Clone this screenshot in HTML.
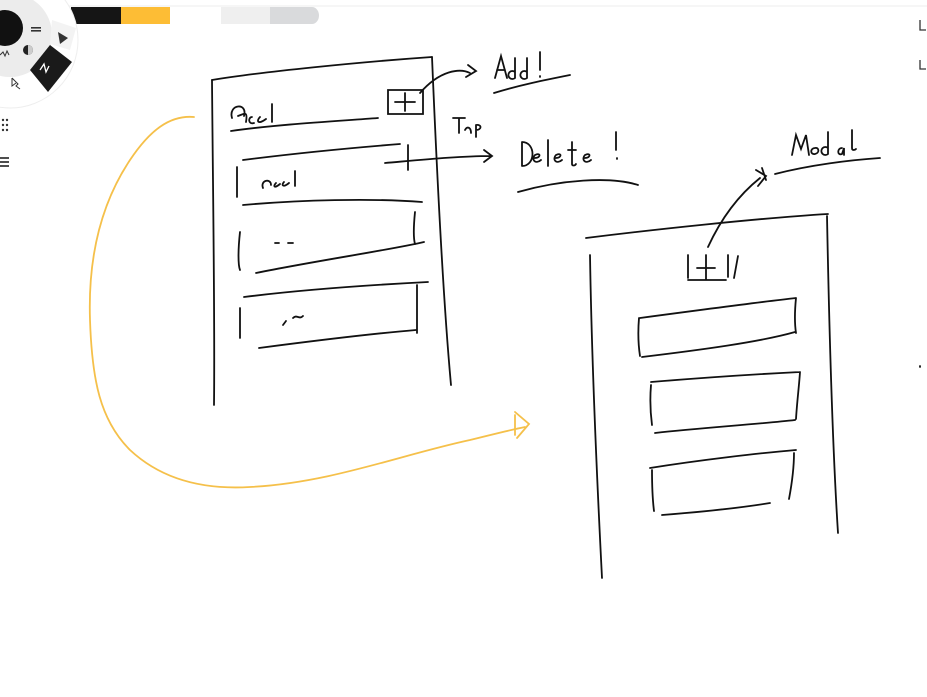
<!DOCTYPE html>
<html><head><style>
html,body{margin:0;padding:0;background:#fff;width:927px;height:697px;overflow:hidden}
svg{display:block}
text{font-family:"Liberation Sans",sans-serif}
</style></head><body>
<svg width="927" height="697" viewBox="0 0 927 697" xmlns="http://www.w3.org/2000/svg">
<line x1="0" y1="6" x2="927" y2="6" stroke="#eee" stroke-width="1"/>
<rect x="71" y="7" width="50" height="17" fill="#151515"/>
<rect x="121" y="7" width="49" height="17" fill="#fdbd35"/>
<rect x="221" y="7" width="49" height="17" fill="#efefef"/>
<path d="M270 7 H312 a7 8.5 0 0 1 0 17 H270 Z" fill="#d9dadc"/>
<circle cx="10" cy="40" r="68" fill="#fff" stroke="#eee"/>
<circle cx="10" cy="35" r="42" fill="#ececec"/>
<path d="M30 70 L50 45 L72 62 L48 92 Z" fill="#1a1a1a"/>
<path d="M52 20 L76 28 L70 50 L50 44 Z" fill="#f3f3f3"/>
<path d="M58 32 L68 38 L60 44 Z" fill="#333"/>
<circle cx="5" cy="28" r="18" fill="#111"/>
<rect x="31" y="27" width="10" height="1.6" fill="#333"/><rect x="31" y="30" width="10" height="1.6" fill="#333"/>
<circle cx="28" cy="50" r="5" fill="#222"/><path d="M28 45 a5 5 0 0 1 0 10 Z" fill="#ccc"/>
<path d="M40 70 l4 -6 l2 8 l3 -6" stroke="#fff" fill="none" stroke-width="1.3"/>
<path d="M0 55 l3 -3 l2 4 l2 -5 l2 4" stroke="#333" fill="none"/>
<path d="M12 78 l6 6 l-2 2 l4 3 m-8 -11 l0 8 l4 -3" stroke="#333" fill="none"/>
<g fill="#333"><circle cx="3" cy="120" r="1.2"/><circle cx="7" cy="120" r="1.2"/><circle cx="3" cy="125" r="1.2"/><circle cx="7" cy="125" r="1.2"/><circle cx="3" cy="130" r="1.2"/><circle cx="7" cy="130" r="1.2"/></g>
<g stroke="#222" stroke-width="1.6"><line x1="0" y1="158" x2="9" y2="158"/><line x1="0" y1="162" x2="9" y2="162"/><line x1="0" y1="166" x2="9" y2="166"/></g>
<path d="M920 20 v10 h6 M920 60 v9 h6" stroke="#333" fill="none" stroke-width="1.3"/>
<g stroke="#111" stroke-width="1.8" fill="none" stroke-linecap="round">
<path d="M212 80 C260 72 360 62 432 57"/>
<path d="M212 80 C213 200 215 320 214 405"/>
<path d="M432 57 C438 200 445 320 451 385"/>
<path d="M232 118 c-4 -14 16 -16 12 -2 M238 116 c6 -2 10 -6 8 6 m6 -5 c-4 0 -4 8 2 6 m6 -6 c-4 4 -2 8 6 2 m6 -15 v18"/>
<path d="M231 131 C280 124 340 121 378 118"/>
<path d="M388 90 h35 v24 h-35 z M405 93 v18 M395 102 h20"/>
<path d="M420 93 C440 70 460 68 470 73 M468 65 l8 6 l-10 6"/>
<path d="M495 78 l6 -22 l6 22 M497 70 h8 M515 72 a4 4 0 1 0 0 6 v-20 M527 72 a4 4 0 1 0 0 6 v-20 M540 52 v18 M540 76 v1"/>
<path d="M494 93 C520 85 545 80 570 75"/>
<path d="M243 160 C290 154 350 148 400 144"/>
<path d="M237 167 v30 M408 145 v25"/>
<path d="M263 188 c-3 -8 8 -10 8 -3 m5 -2 c-3 3 -2 6 4 1 m4 -2 c-3 3 -1 6 5 1 m6 -12 v15"/>
<path d="M385 163 C420 160 460 156 490 156 M484 150 l8 6 l-8 6"/>
<path d="M453 118 h12 M459 118 v15 M465 130 c2 -4 6 -3 6 3 M476 125 v12 M476 125 c6 -1 6 5 0 5"/>
<path d="M522 142 v24 M522 142 c14 0 14 24 0 24 M535 158 c6 0 6 -6 0 -3 c-4 4 0 10 6 5 M548 140 v26 M556 158 c6 0 6 -6 0 -3 c-4 4 0 10 6 5 M568 150 h8 M572 142 v22 c0 2 3 2 4 0 M585 158 c6 0 6 -6 0 -3 c-4 4 0 10 6 5 M616 132 v18 M617 158 v1"/>
<path d="M518 192 C560 180 610 176 638 185"/>
<path d="M243 205 C300 200 370 198 422 202"/>
<path d="M240 232 C238 250 238 265 240 270 M415 212 c-1 10 -2 25 0 32"/>
<path d="M256 273 C320 260 390 250 424 242"/>
<path d="M275 243 h4 M288 243 h5"/>
<path d="M244 297 C300 290 370 285 428 282"/>
<path d="M240 308 v30 M417 285 v48"/>
<path d="M283 325 l3 -4 M293 318 c4 -4 6 2 10 -2"/>
<path d="M259 348 C320 340 380 333 416 330"/>
<path d="M586 238 C650 230 760 218 828 214"/>
<path d="M590 255 C592 380 598 500 602 578"/>
<path d="M827 216 C829 320 832 440 838 533"/>
<path d="M688 255 v23 M688 280 h38 M706 255 v24 M697 268 h18 M728 255 v22 M738 256 l-4 22"/>
<path d="M708 247 C725 210 745 190 760 178 M756 170 l10 6 l-8 10 M762 168 l4 12"/>
<path d="M775 174 C810 165 850 160 880 158"/>
<path d="M792 155 l4 -20 l5 14 l5 -14 l3 20 M815 148 c-5 0 -5 7 0 6 c5 -1 4 -7 0 -6 M828 148 a4 4 0 1 0 0 6 v-22 M842 148 c-5 0 -5 8 0 6 l2 -6 v7 M852 130 v18 c0 3 3 2 4 1"/>
<path d="M640 318 C700 310 760 302 796 298 M639 318 c-1 12 -1 25 1 38 M796 298 c-1 10 -2 22 0 35 M642 357 C700 350 760 342 795 332"/>
<path d="M651 382 C700 378 760 374 800 372 M651 385 c-1 12 -1 25 1 40 M800 372 c-1 15 -3 30 -4 47 M655 433 C700 428 760 424 795 420"/>
<path d="M650 468 C700 460 760 453 796 450 M652 470 c0 12 0 25 2 41 M794 453 c0 15 -2 30 -5 46 M662 515 C700 512 740 508 770 503"/>
<path d="M920 366 v1"/>
</g>
<g stroke="#f5c04a" stroke-width="1.8" fill="none" stroke-linecap="round">
<path d="M194 117 C170 115 150 130 130 160 C100 205 88 260 90 320 C92 380 100 420 130 450 C160 478 200 490 250 487 C330 483 400 455 470 440 C490 435 510 430 525 427"/>
<path d="M515 412 l14 12 l-12 14 M515 415 v20"/>
</g>
</svg>
</body></html>
